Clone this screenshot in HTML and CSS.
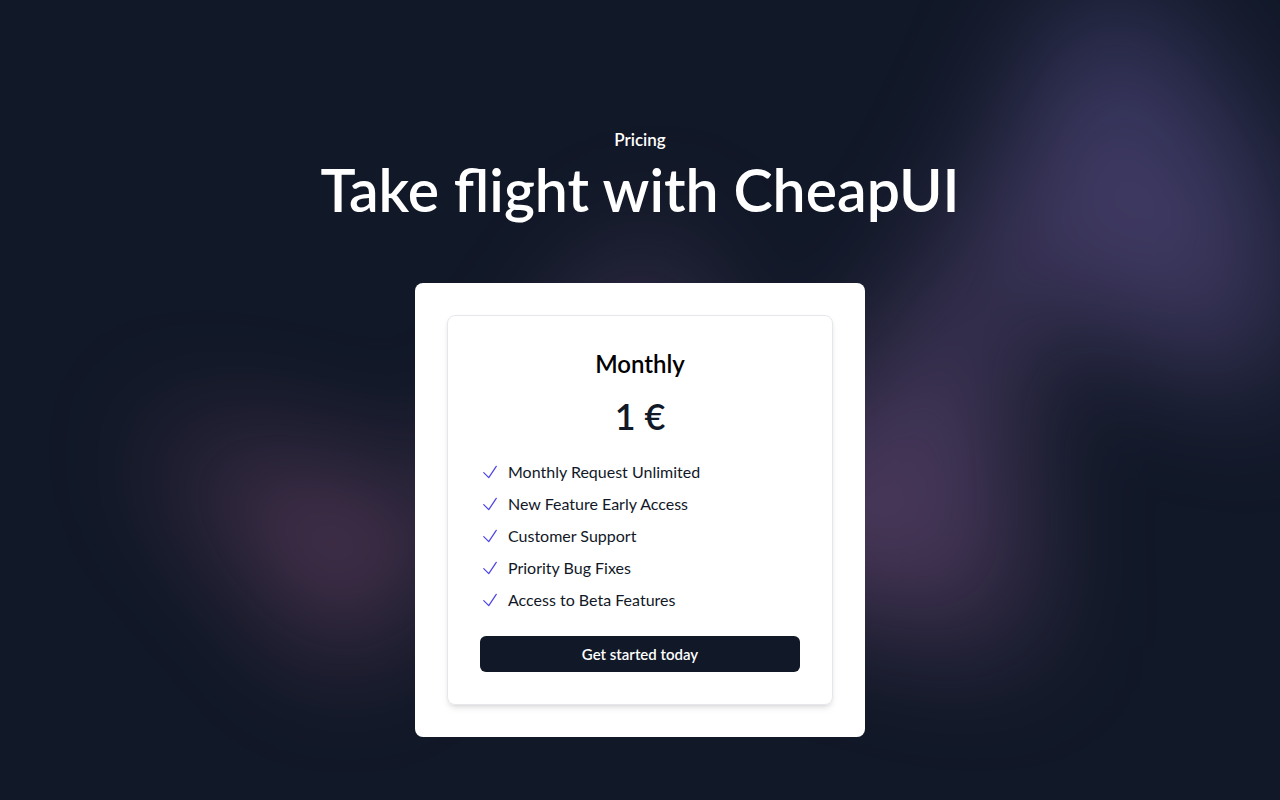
FILE: index.html
```
<!DOCTYPE html>
<html lang="en">
<head>
  <meta charset="UTF-8" />
  <meta name="viewport" content="width=device-width, initial-scale=1" />
  <title>CheapUI - Pricing</title>
  <link rel="stylesheet" href="styles.css">
</head>
<body>
  <svg class="hidden" aria-hidden="true">
    <symbol id="check" viewBox="0 0 24 24">
      <path d="M4.5 12.75l6 6 9-13.5" fill="none" stroke="currentColor" stroke-width="1.5" stroke-linecap="round" stroke-linejoin="round" />
    </symbol>
  </svg>

  <main class="pricing">
    <div class="glow" aria-hidden="true">
      <div class="glow-shape"></div>
    </div>

    <header class="intro">
      <p class="eyebrow">Pricing</p>
      <h1>Take flight with CheapUI</h1>
    </header>

    <div class="panel">
      <section class="plan">
        <h2>Monthly</h2>
        <p class="price">1 €</p>
        <ul class="features">
          <li><svg class="check"><use href="#check" /></svg>Monthly Request Unlimited</li>
          <li><svg class="check"><use href="#check" /></svg>New Feature Early Access</li>
          <li><svg class="check"><use href="#check" /></svg>Customer Support</li>
          <li><svg class="check"><use href="#check" /></svg>Priority Bug Fixes</li>
          <li><svg class="check"><use href="#check" /></svg>Access to Beta Features</li>
        </ul>
        <button type="button">Get started today</button>
      </section>
    </div>
  </main>
</body>
</html>
```
FILE: styles.css
```
* { box-sizing: border-box; margin: 0; padding: 0; }
body { font-family: Lato, "Liberation Sans", sans-serif; font-size: 16px; line-height: 24px; background: #111827; color: #111827; }
.hidden { display: none; }

.pricing { position: relative; isolation: isolate; overflow: hidden; min-height: 100vh; padding: 128px 32px 63px; }

/* blurred gradient behind the page */
.glow { position: absolute; top: -12px; left: 0; right: 0; z-index: -1; overflow: hidden; padding: 0 144px; filter: blur(64px); }
.glow-shape {
  width: 1155px;
  aspect-ratio: 1155 / 678;
  background: linear-gradient(to top right, #ff80b5, #9089fc);
  opacity: 0.3;
  clip-path: polygon(74.1% 44.1%, 100% 61.6%, 97.5% 26.9%, 85.5% 0.1%, 80.7% 2%, 72.5% 32.5%, 60.2% 62.4%, 52.4% 68.1%, 47.5% 58.3%, 45.2% 34.5%, 27.5% 76.7%, 0.1% 64.9%, 17.9% 100%, 27.6% 76.8%, 76.1% 97.7%, 74.1% 44.1%);
}

.intro { text-align: center; color: #fff; }
.eyebrow { font-size: 17px; font-weight: 600; }
h1 { margin-top: 8px; font-size: 59px; line-height: 60px; font-weight: 600; }

.panel { max-width: 450px; margin: 63px auto 0; padding: 32px; background: #fff; border-radius: 8px; }
.plan { padding: 32px; border: 1px solid #e5e7eb; border-radius: 8px; box-shadow: 0 4px 6px -1px rgba(0, 0, 0, 0.1), 0 2px 4px -2px rgba(0, 0, 0, 0.1); }
h2 { font-size: 24px; line-height: 32px; font-weight: 600; text-align: center; color: #000; }
.price { margin-top: 16px; font-size: 36px; line-height: 40px; font-weight: 600; text-align: center; }
.features { display: grid; gap: 8px; margin: 24px 0; list-style: none; }
.features li { display: flex; align-items: center; gap: 8px; }
.check { width: 20px; height: 20px; color: #4f46e5; }
button { width: 100%; height: 36px; border: 0; border-radius: 6px; background: #111827; color: #fff; font: 600 15px/20px Lato, "Liberation Sans", sans-serif; }
```
